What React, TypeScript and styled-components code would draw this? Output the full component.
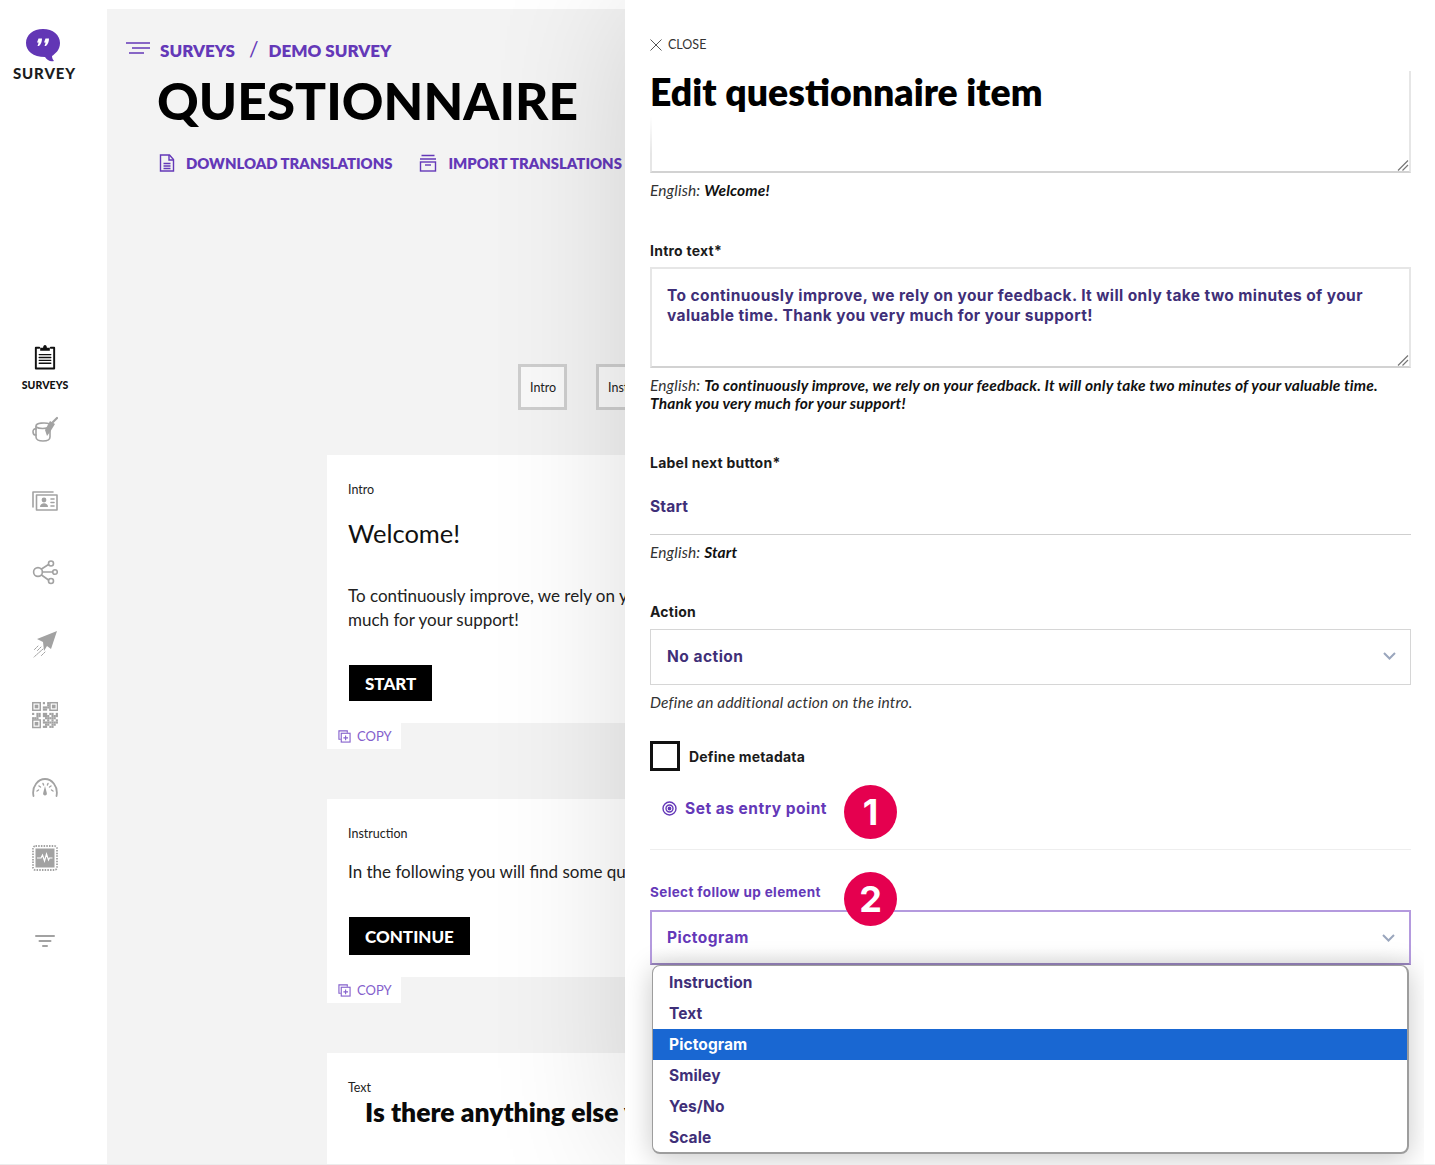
import React from "react";
import styled, { createGlobalStyle } from "styled-components";

const Global = createGlobalStyle`
  html, body { margin: 0; padding: 0; background: #fff; }
  body { font-family: "Lato", "Liberation Sans", sans-serif; color: #000; }
  * { box-sizing: border-box; }
`;

const purple = "#6438b8";
const ink = "#3f2f78";
const gray = "#a2a2a2";

const Page = styled.div`
  width: 1435px;
  height: 1165px;
  border-bottom: 1px solid #ececec;
  overflow: hidden;
`;
const Frame = styled.div`
  width: 1424px;
  height: 1164px;
  display: flex;
  overflow: hidden;
`;

/* sidebar */
const Sidebar = styled.aside`
  width: 107px;
  flex: none;
  display: flex;
  flex-direction: column;
  align-items: center;
  padding-top: 29px;
  padding-right: 17px;
`;
const LogoMark = styled.svg`
  width: 36px;
  height: 33px;
  margin-left: -4px;
`;
const LogoText = styled.div`
  font-weight: 900;
  font-size: 15px;
  line-height: 18px;
  letter-spacing: 0.9px;
  color: #1c1c1c;
  margin-top: 2px;
  margin-left: -1px;
`;
const Nav = styled.nav`
  margin-top: 261px;
  display: flex;
  flex-direction: column;
  align-items: center;
`;
const NavItem = styled.div<{ $h: number }>`
  height: ${(p) => p.$h}px;
  display: flex;
  flex-direction: column;
  align-items: center;
`;
const NavLabel = styled.div`
  font-size: 10.5px;
  font-weight: 900;
  line-height: 14px;
  margin-top: 8px;
  color: #111;
  letter-spacing: 0.1px;
`;
const NavIcon = styled.svg`
  width: 26px;
  height: 28px;
  color: ${gray};
  display: block;
`;
const ActiveIcon = styled(NavIcon)`
  color: #111;
`;

/* main */
const Main = styled.main`
  width: 518px;
  height: 1155px;
  flex: none;
  margin-top: 9px;
  background: #f3f3f3;
  overflow: hidden;
  padding-top: 30px;
`;
const Crumbs = styled.div`
  display: flex;
  align-items: center;
  height: 22px;
  padding-left: 19px;
  color: ${purple};
  font-weight: 800;
  font-size: 17px;
  white-space: nowrap;
`;
const CrumbIcon = styled.svg`
  width: 24px;
  height: 12px;
  margin-right: 10px;
  margin-top: -4px;
`;
const CrumbSlash = styled.span`
  margin: -3px 10px 0 14px;
  font-weight: 400;
  font-size: 21px;
`;
const PageTitle = styled.h1`
  margin: 9px 0 0 50px;
  font-size: 51.5px;
  line-height: 60px;
  font-weight: 900;
  color: #000;
  white-space: nowrap;
`;
const Actions = styled.div`
  margin: 22px 0 0 52px;
  height: 21px;
  display: flex;
  align-items: center;
  color: ${purple};
  font-weight: 800;
  font-size: 14.85px;
  white-space: nowrap;
`;
const ActionIcon = styled.svg`
  width: 16px;
  height: 18px;
  flex: none;
  margin-right: 11px;
`;
const ActionText = styled.span`
  margin-right: 27px;
`;
const Tabs = styled.div`
  margin: 191px 0 0 411px;
  display: flex;
  gap: 29px;
  width: 200px;
`;
const Tab = styled.div`
  width: 49px;
  height: 46px;
  flex: none;
  border: 3px solid #cecece;
  background: #f9f9f9;
  font-size: 12.5px;
  display: flex;
  align-items: center;
  padding-left: 9px;
  color: #222;
`;
const Card = styled.section<{ $top: number; $last?: boolean }>`
  margin: ${(p) => p.$top}px 0 0 220px;
  width: 950px;
  min-height: ${(p) => (p.$last ? 120 : 0)}px;
  background: #fff;
  padding: 26px 22px 22px 21px;
`;
const CardKind = styled.div`
  font-size: 12.5px;
  line-height: 18px;
  color: #222;
`;
const CardHeading = styled.div`
  font-size: 25.5px;
  line-height: 34px;
  margin-top: 17px;
  color: #111;
`;
const CardPara = styled.p<{ $top: number }>`
  font-size: 17px;
  line-height: 24px;
  margin: ${(p) => p.$top}px 0 0;
  color: #222;
`;
const CardButton = styled.div<{ $h: number }>`
  display: inline-flex;
  align-items: center;
  height: ${(p) => p.$h}px;
  margin: 33px 0 0 1px;
  padding: 0 16px;
  background: #000;
  color: #fff;
  font-weight: 900;
  font-size: 17px;
  vertical-align: top;
`;
const CopyTab = styled.div`
  margin-left: 220px;
  width: 74px;
  height: 26px;
  background: #fff;
  display: flex;
  align-items: center;
  gap: 6px;
  padding-left: 11px;
  font-size: 13px;
  color: #8460cc;
`;
const CopyIcon = styled.svg`
  width: 13px;
  height: 13px;
`;
const CardLead = styled.div`
  font-size: 26.5px;
  font-weight: 800;
  line-height: 30px;
  margin-left: 17px;
  color: #0a0a0a;
  white-space: nowrap;
`;

/* panel */
const Panel = styled.div`
  position: relative;
  z-index: 1;
  flex: 1;
  height: 1164px;
  background: #fff;
  padding: 36px 13px 0 25px;
  box-shadow: 0 0 130px rgba(0, 0, 0, 0.14);
`;
const Close = styled.div`
  display: flex;
  align-items: center;
  gap: 6px;
  height: 16px;
  font-size: 12.5px;
  color: #333;
`;
const CloseIcon = styled.svg`
  width: 12px;
  height: 12px;
  margin-top: 2px;
`;
const FieldText = styled.div`
  font-family: "Inter", sans-serif;
`;
const TitleField = styled.div`
  position: relative;
  margin-top: 19px;
`;
const PanelTitle = styled.h2`
  position: absolute;
  left: -1px;
  right: 2px;
  top: -1px;
  height: 84px;
  margin: 0;
  padding-left: 1px;
  font-size: 37.4px;
  line-height: 44px;
  font-weight: 800;
  color: #000;
  background: linear-gradient(#fff 55%, rgba(255, 255, 255, 0));
`;
const Area = styled(FieldText)<{ $h: number; $top: number }>`
  position: relative;
  height: ${(p) => p.$h}px;
  margin-top: ${(p) => p.$top}px;
  border: 2px solid #e6e6e6;
  border-bottom-color: #d2d2d2;
  padding: 17px 15px;
  font-size: 15.5px;
  font-weight: 700;
  line-height: 20px;
  letter-spacing: 0.4px;
  color: ${ink};
`;
const Grip = styled.svg`
  position: absolute;
  right: 0;
  bottom: 0;
  width: 12px;
  height: 12px;
`;
const Hint = styled.div<{ $top?: number }>`
  margin-top: ${(p) => p.$top ?? 8}px;
  font-size: 15.5px;
  line-height: 18px;
  font-style: italic;
  letter-spacing: 0.15px;
  color: #333;
`;
const HintValue = styled.strong`
  font-weight: 700;
  color: #111;
`;
const Label = styled(FieldText)<{ $top: number }>`
  margin-top: ${(p) => p.$top}px;
  font-size: 14px;
  line-height: 18px;
  font-weight: 700;
  letter-spacing: 0.24px;
  color: #1b1b1b;
`;
const LineInput = styled(FieldText)`
  margin-top: 8px;
  height: 55px;
  border-bottom: 1px solid #cfcfcf;
  padding-top: 17px;
  font-size: 15.5px;
  line-height: 20px;
  font-weight: 700;
  letter-spacing: 0.2px;
  color: ${ink};
`;
const SelectBox = styled(FieldText)<{ $active?: boolean }>`
  margin-top: ${(p) => (p.$active ? 9 : 8)}px;
  height: ${(p) => (p.$active ? 55 : 56)}px;
  border: ${(p) => (p.$active ? "2px solid #b49ade" : "1px solid #d6d6d6")};
  border-bottom-color: ${(p) => (p.$active ? "#9683bb" : "#d6d6d6")};
  display: flex;
  align-items: center;
  justify-content: space-between;
  padding: 0 14px ${(p) => (p.$active ? 0 : 2)}px ${(p) => (p.$active ? 15 : 16)}px;
  font-size: 15.5px;
  font-weight: 700;
  letter-spacing: 0.48px;
  color: ${(p) => (p.$active ? purple : ink)};
  background: ${(p) => (p.$active ? "linear-gradient(#fff 70%, #f3f3f3)" : "#fff")};
`;
const Chevron = styled.svg`
  width: 13px;
  height: 8px;
`;
const CheckRow = styled(FieldText)`
  margin-top: 30px;
  display: flex;
  align-items: center;
  gap: 9px;
  font-size: 14px;
  font-weight: 700;
  letter-spacing: 0.2px;
  color: #1b1b1b;
`;
const Box = styled.div`
  width: 30px;
  height: 30px;
  border: 3px solid #111;
  background: #fff;
`;
const EntryRow = styled(FieldText)`
  position: relative;
  margin-top: 27px;
  padding-left: 12px;
  height: 20px;
  display: flex;
  align-items: center;
  gap: 8px;
  font-size: 15.5px;
  font-weight: 700;
  letter-spacing: 0.5px;
  color: ${purple};
`;
const EntryIcon = styled.svg`
  width: 15px;
  height: 15px;
`;
const Badge = styled.div<{ $top: number }>`
  position: absolute;
  left: 194px;
  top: ${(p) => p.$top}px;
  width: 53px;
  height: 54px;
  border-radius: 50%;
  background: #e5004f;
  color: #fff;
  font-family: "Inter", sans-serif;
  font-size: 36px;
  font-weight: 700;
  letter-spacing: 0;
  display: flex;
  align-items: center;
  justify-content: center;
`;
const Divider = styled.div`
  margin-top: 31px;
  height: 1px;
  background: #eeeeee;
`;
const FollowUp = styled.div`
  position: relative;
  margin-top: 33px;
`;
const FollowLabel = styled(FieldText)`
  font-size: 13.5px;
  line-height: 18px;
  font-weight: 700;
  letter-spacing: 0.38px;
  color: ${purple};
`;
const Menu = styled(FieldText)`
  position: absolute;
  left: 2px;
  right: 2px;
  top: 82px;
  height: 189px;
  padding-top: 1px;
  background: #fff;
  border: 1px solid #9d9d9d;
  border-bottom-width: 2px;
  border-right-width: 2px;
  border-radius: 8px;
  box-shadow: 0 4px 28px rgba(0, 0, 0, 0.22);
  overflow: hidden;
  z-index: 2;
`;
const MenuItem = styled.div<{ $selected?: boolean }>`
  height: 31px;
  line-height: 31px;
  padding-left: 16px;
  font-size: 15.5px;
  font-weight: 700;
  letter-spacing: 0.1px;
  color: ${(p) => (p.$selected ? "#fff" : ink)};
  background: ${(p) => (p.$selected ? "#1967d2" : "transparent")};
`;

const Stroke = { fill: "none", stroke: "currentColor", strokeWidth: 1.6, strokeLinecap: "round" as const, strokeLinejoin: "round" as const };

const qrCells: [number, number][] = [];
for (let y = 0; y < 24; y += 2) {
  for (let x = 0; x < 24; x += 2) {
    const finder = (x < 9 && y < 9) || (x > 14 && y < 9) || (x < 9 && y > 14);
    if (!finder && ((x * 7 + y * 13 + (x * y) % 5) % 3 !== 0)) qrCells.push([x, y]);
  }
}

const Clipboard = () => (
  <ActiveIcon viewBox="0 0 26 28" style={{ height: 27 }}>
    <path d="M7 5H3.5v21.5h19V5H19" {...Stroke} strokeWidth={2} />
    <path d="M8 8V5h3c0-4 4-4 4 0h3v3z" fill="currentColor" />
    <path d="M7 12h12M7 15h12M7 18h12M7 21h12" {...Stroke} strokeWidth={1.4} />
  </ActiveIcon>
);
const Bucket = () => (
  <NavIcon viewBox="0 0 26 28">
    <path d="M4 10c0-3 9-4 14-2v13c0 3-3 4-7 4s-7-1-7-4z" {...Stroke} />
    <path d="M4 13c-4-1-4 6 0 6M4 11c3 2 10 2 14 0" {...Stroke} />
    <path d="M13 14l5-9 5 3-5 8-3 4z" fill="currentColor" />
    <path d="M21 6l4-4" {...Stroke} strokeWidth={2.2} />
  </NavIcon>
);
const Cards = () => (
  <NavIcon viewBox="0 0 26 28">
    <path d="M1 20V5h20" {...Stroke} />
    <rect x="4.5" y="8" width="20.5" height="15" {...Stroke} />
    <circle cx="12" cy="13" r="2.4" fill="currentColor" />
    <path d="M8 20c0-5 8-5 8 0z" fill="currentColor" />
    <path d="M19 12h3M19 15.500h3M19 19h3" {...Stroke} />
  </NavIcon>
);
const Share = () => (
  <NavIcon viewBox="0 0 26 28">
    <circle cx="6" cy="14" r="4.4" {...Stroke} />
    <circle cx="19" cy="5.500" r="2.500" {...Stroke} />
    <circle cx="23" cy="14" r="2.300" {...Stroke} />
    <circle cx="19" cy="23" r="2.500" {...Stroke} />
    <path d="M9.500 11l7-4.500M10.500 14H20.500M9.500 17l7 5" {...Stroke} />
  </NavIcon>
);
const Plane = () => (
  <NavIcon viewBox="0 0 26 28">
    <path d="M25 1L5 9l6 3 1 9 3-5 4 3z" fill="currentColor" />
    <path d="M9 17l-4 4M11 19l-9 8M13 22l-4 4M6 16l-4 4" {...Stroke} strokeWidth={1} strokeDasharray="2 1" />
  </NavIcon>
);
const Qr = () => (
  <NavIcon viewBox="0 0 24 26" fill="currentColor">
    <g transform="translate(0 1)">
      {[[0, 0], [16, 0], [0, 16]].map(([x, y]) => (
        <g key={`${x}-${y}`}>
          <rect x={x + 0.6} y={y + 0.6} width="7" height="7" fill="none" stroke="currentColor" strokeWidth="1.400" />
          <rect x={x + 2.4} y={y + 2.4} width="3.400" height="3.400" />
        </g>
      ))}
      {qrCells.map(([x, y]) => <rect key={`${x}-${y}`} x={x} y={y} width="2" height="2" />)}
    </g>
  </NavIcon>
);
const Gauge = () => (
  <NavIcon viewBox="0 0 26 28">
    <path d="M1.500 23c-2-10 5-17 11.500-17s13.500 7 11.500 17" {...Stroke} strokeWidth={1.8} />
    <path d="M5 18l1.500-1M7 13l1.500 1M11 10.500l.6 1.600M16 10.500l-.6 1.600M19 13l-1.500 1M21 18l-1.500-1" {...Stroke} strokeWidth={1.4} />
    <path d="M13 13l1.800 7a1.900 1.900 0 1 1-3.600 0z" fill="currentColor" />
  </NavIcon>
);
const Chip = () => (
  <NavIcon viewBox="0 0 26 28">
    <rect x="1" y="2" width="24" height="24" rx="2.500" fill="none" stroke="currentColor" strokeDasharray="1.500 1.200" strokeWidth="1.800" />
    <rect x="3.500" y="4.500" width="19" height="19" fill="currentColor" />
    <path d="M5 14h4l1.500-3 2 6 2-7 2 6 1-2h3" fill="none" stroke="#fff" strokeWidth="1.200" />
  </NavIcon>
);
const Filter = () => (
  <NavIcon viewBox="0 0 26 28">
    <path d="M4 9h18M7.500 14h11M11 19h4" {...Stroke} strokeWidth={2} />
  </NavIcon>
);
const Copy = () => (
  <CopyIcon viewBox="0 0 14 14" fill="none" stroke="currentColor" strokeWidth="1.200">
    <path d="M3 10H1V1h9v2" />
    <rect x="3.500" y="3.500" width="9.500" height="9.500" />
    <path d="M8.200 6v5M5.800 8.500h5" />
  </CopyIcon>
);
const Down = () => (
  <Chevron viewBox="0 0 13 8" fill="none" stroke="#9aa6bd" strokeWidth="2">
    <path d="M1 1l5.500 5.500L12 1" />
  </Chevron>
);
const ResizeGrip = () => (
  <Grip viewBox="0 0 12 12" fill="none" stroke="#777" strokeWidth="1.200">
    <path d="M1 11.500L11 1.500M5.500 11.500L11 6" />
  </Grip>
);

export default function App() {
  return (
    <Page>
      <Global />
      <Frame>
        <Sidebar>
          <LogoMark viewBox="0 0 36 33">
            <path d="M18 0c10 0 17 6 17 14 0 7-5 11-8 13 0 2 1 4 2 5-4 1-7-1-9-4C8 28 1 22 1 14 1 6 8 0 18 0z" fill="#6236b5" />
            <path d="M13.500 9.500h3.500c0 3-1 5.500-3 7.500h-1.500c.6-1.500 1-2.500 1-3.500h-1.500zM20.500 9.500h3.500c0 3-1 5.500-3 7.500h-1.500c.6-1.500 1-2.500 1-3.500h-1.500z" fill="#fff" />
          </LogoMark>
          <LogoText>SURVEY</LogoText>
          <Nav>
            <NavItem $h={73}><Clipboard /><NavLabel>SURVEYS</NavLabel></NavItem>
            <NavItem $h={71}><Bucket /></NavItem>
            <NavItem $h={71}><Cards /></NavItem>
            <NavItem $h={72}><Share /></NavItem>
            <NavItem $h={71}><Plane /></NavItem>
            <NavItem $h={72}><Qr /></NavItem>
            <NavItem $h={71}><Gauge /></NavItem>
            <NavItem $h={83}><Chip /></NavItem>
            <NavItem $h={30}><Filter /></NavItem>
          </Nav>
        </Sidebar>

        <Main>
          <Crumbs>
            <CrumbIcon viewBox="0 0 24 12" fill="none" stroke={purple} strokeWidth="1.600">
              <path d="M0 1h24M6 6h18M3 11h15" />
            </CrumbIcon>
            SURVEYS<CrumbSlash>/</CrumbSlash>DEMO SURVEY
          </Crumbs>
          <PageTitle>QUESTIONNAIRE</PageTitle>
          <Actions>
            <ActionIcon viewBox="0 0 16 18" fill="none" stroke={purple} strokeWidth="1.400">
              <path d="M1.500 1h9l4 4.500V17h-13z" />
              <path d="M10 1v5h5M4.500 9.500h7M4.500 12h7M4.500 14.500h7" />
            </ActionIcon>
            <ActionText>DOWNLOAD TRANSLATIONS</ActionText>
            <ActionIcon viewBox="0 0 18 18" fill="none" stroke={purple} strokeWidth="1.400" style={{ width: 18 }}>
              <path d="M2.500 1.500h13M1 5h16" />
              <rect x="1.500" y="8" width="15" height="9" />
              <path d="M6 11h6" />
            </ActionIcon>
            <span>IMPORT TRANSLATIONS</span>
          </Actions>
          <Tabs>
            <Tab>Intro</Tab>
            <Tab>Instruction</Tab>
          </Tabs>
          <Card $top={45}>
            <CardKind>Intro</CardKind>
            <CardHeading>Welcome!</CardHeading>
            <CardPara $top={34}>
              To continuously improve, we rely on your feedback. It will only take two minutes of your valuable time. Thank you very much for your support!
            </CardPara>
            <CardButton $h={36}>START</CardButton>
          </Card>
          <CopyTab><Copy />COPY</CopyTab>
          <Card $top={50}>
            <CardKind>Instruction</CardKind>
            <CardPara $top={17}>In the following you will find some questions about your experience.</CardPara>
            <CardButton $h={38}>CONTINUE</CardButton>
          </Card>
          <CopyTab><Copy />COPY</CopyTab>
          <Card $top={50} $last>
            <CardKind>Text</CardKind>
            <CardLead>Is there anything else you would like to tell us?</CardLead>
          </Card>
        </Main>

        <Panel>
          <Close>
            <CloseIcon viewBox="0 0 12 12" fill="none" stroke="#555" strokeWidth="1">
              <path d="M0.500 0.500l11 11M11.500 0.500l-11 11" />
            </CloseIcon>
            CLOSE
          </Close>
          <TitleField>
            <Area $h={102} $top={0}><ResizeGrip /></Area>
            <PanelTitle>Edit questionnaire item</PanelTitle>
          </TitleField>
          <Hint>English: <HintValue>Welcome!</HintValue></Hint>
          <Label $top={43}>Intro text*</Label>
          <Area $h={101} $top={7}>
            To continuously improve, we rely on your feedback. It will only take two minutes of your valuable time. Thank you very much for your support!
            <ResizeGrip />
          </Area>
          <Hint>
            English: <HintValue>To continuously improve, we rely on your feedback. It will only take two minutes of your valuable time. Thank you very much for your support!</HintValue>
          </Hint>
          <Label $top={42}>Label next button*</Label>
          <LineInput>Start</LineInput>
          <Hint>English: <HintValue>Start</HintValue></Hint>
          <Label $top={42}>Action</Label>
          <SelectBox>No action<Down /></SelectBox>
          <Hint>Define an additional action on the intro.</Hint>
          <CheckRow><Box />Define metadata</CheckRow>
          <EntryRow>
            <EntryIcon viewBox="0 0 15 15" fill="none" stroke={purple} strokeWidth="1.400">
              <circle cx="7.500" cy="7.500" r="6.500" />
              <circle cx="7.500" cy="7.500" r="3.500" />
              <circle cx="7.500" cy="7.500" r="1.200" fill={purple} />
            </EntryIcon>
            Set as entry point
            <Badge $top={-13}>1</Badge>
          </EntryRow>
          <Divider />
          <FollowUp>
            <FollowLabel>Select follow up element</FollowLabel>
            <SelectBox $active>Pictogram<Down /></SelectBox>
            <Badge $top={-11}>2</Badge>
            <Menu>
              <MenuItem>Instruction</MenuItem>
              <MenuItem>Text</MenuItem>
              <MenuItem $selected>Pictogram</MenuItem>
              <MenuItem>Smiley</MenuItem>
              <MenuItem>Yes/No</MenuItem>
              <MenuItem>Scale</MenuItem>
            </Menu>
          </FollowUp>
        </Panel>
      </Frame>
    </Page>
  );
}
